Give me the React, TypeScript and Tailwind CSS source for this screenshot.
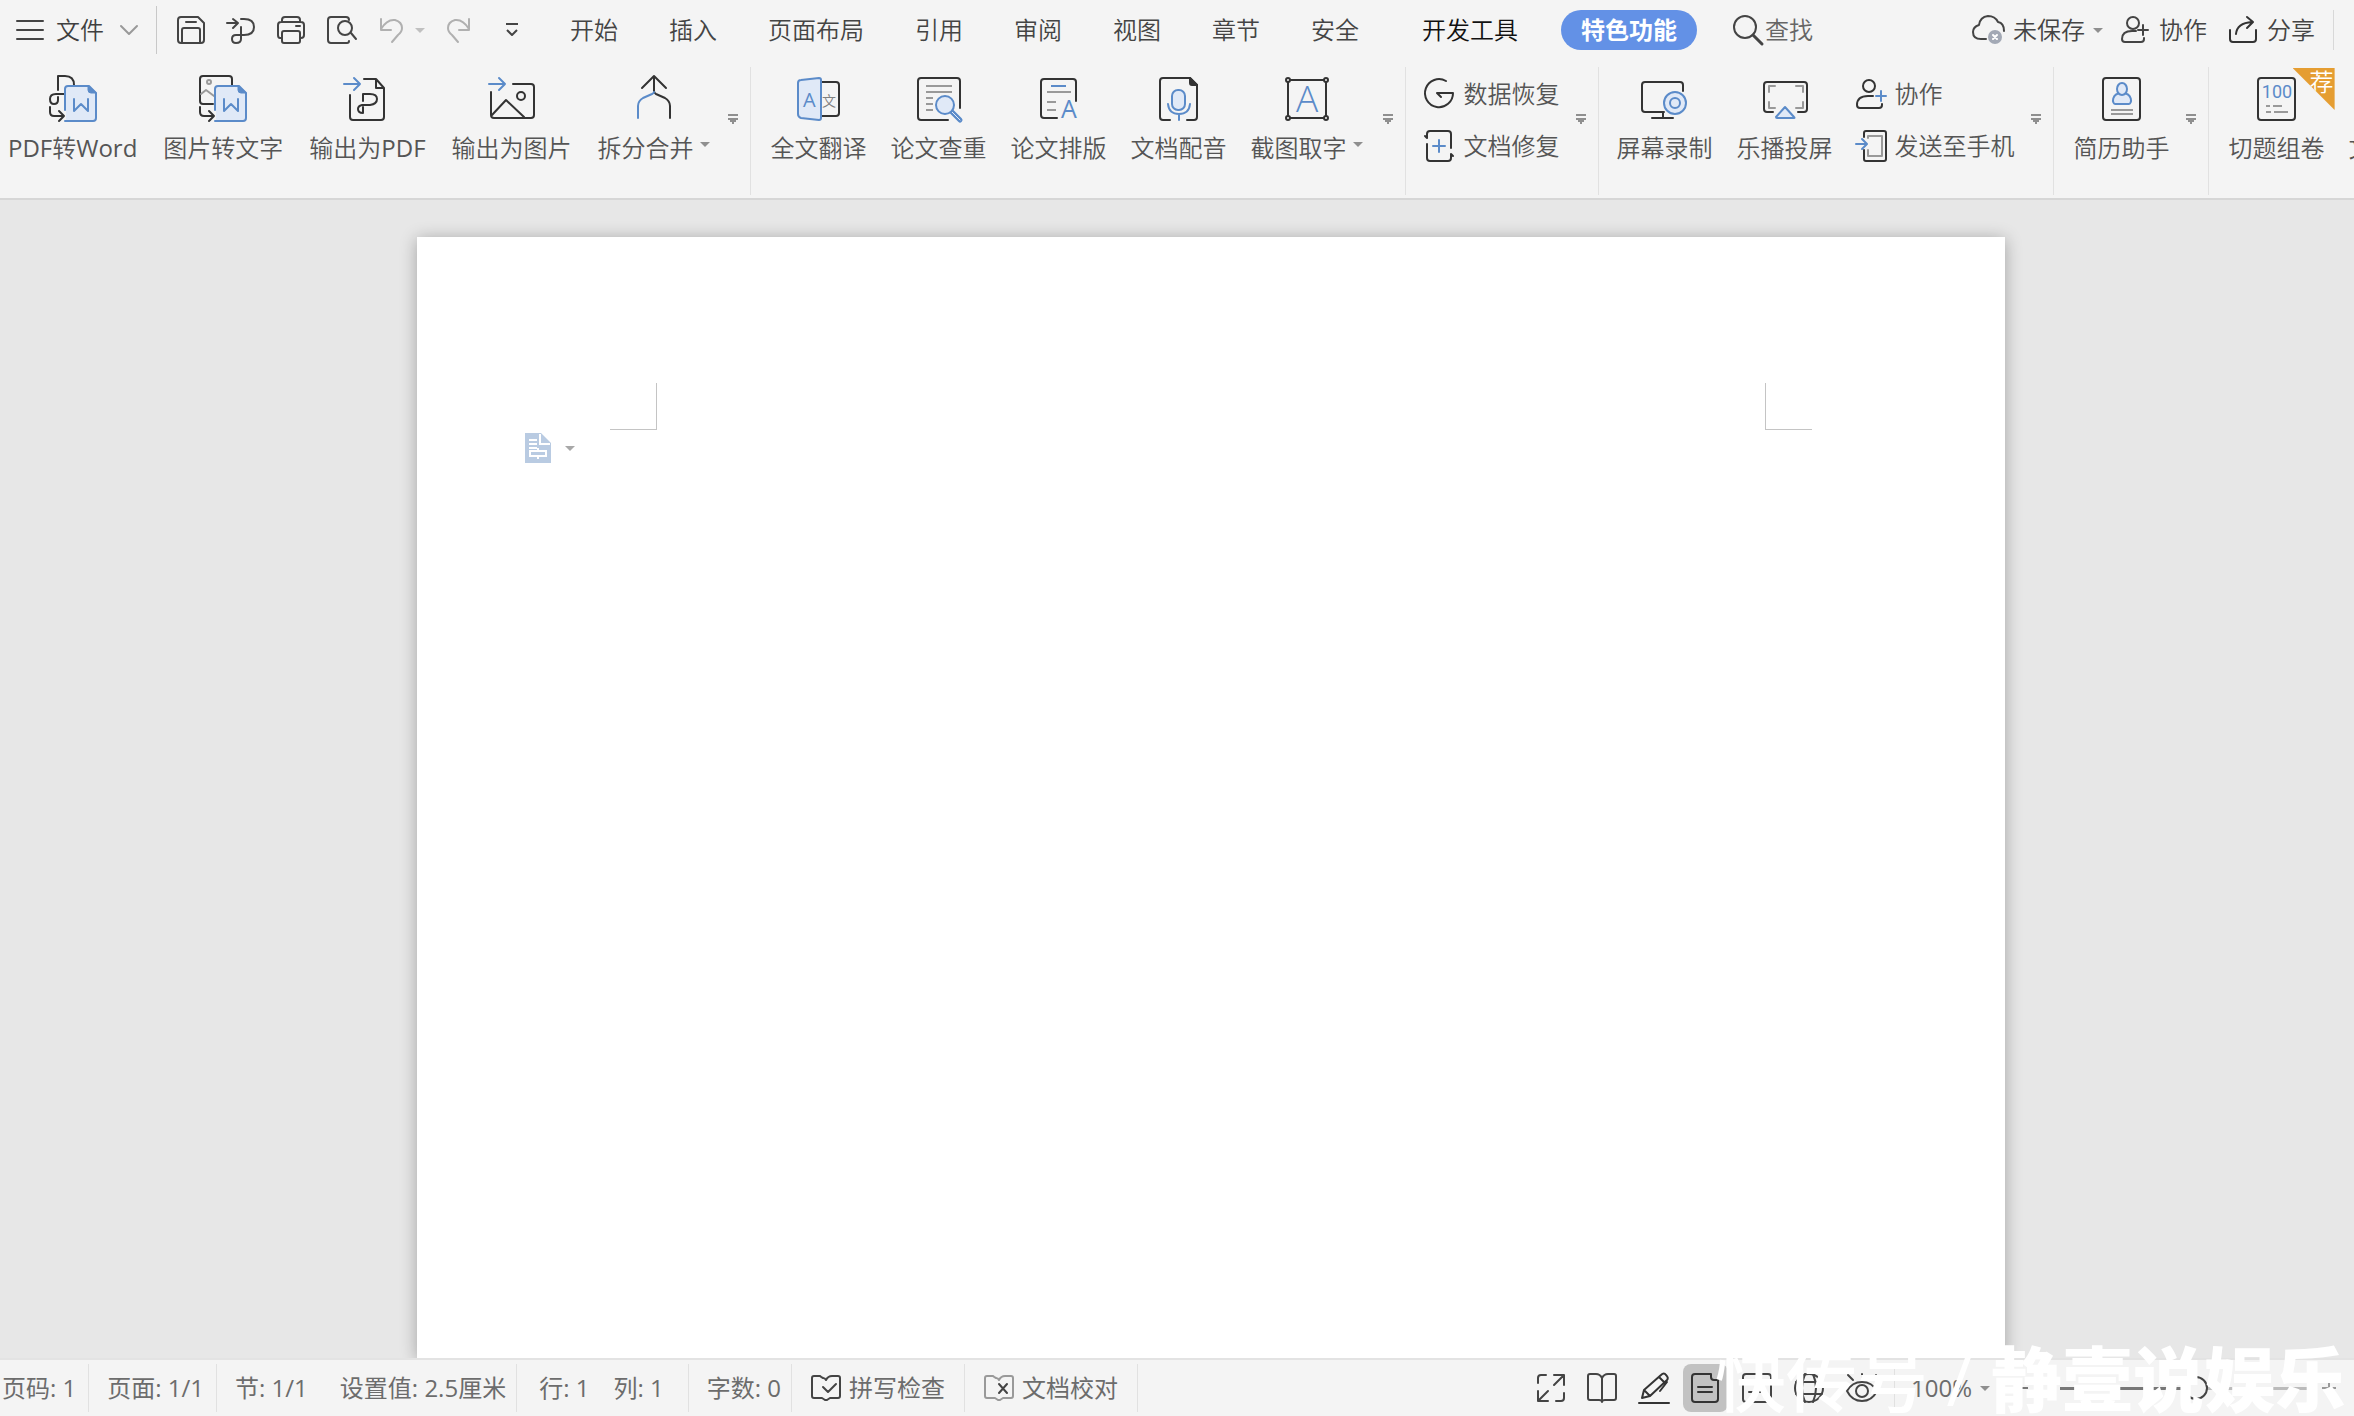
import type { ReactNode } from "react";

const INK = "#333333";
const BLUE = "#5b8bc9";
const TINT = "#e0e9f7";
const GRAY = "#999999";

type IconProps = {
  w?: number;
  h?: number;
  children: ReactNode;
  className?: string;
};

function Icon({ w = 48, h = 48, children, className = "" }: IconProps) {
  return (
    <svg
      width={w}
      height={h}
      viewBox={`0 0 ${w} ${h}`}
      fill="none"
      stroke={INK}
      strokeWidth="2"
      strokeLinecap="round"
      strokeLinejoin="round"
      className={`block shrink-0 overflow-visible ${className}`}
      aria-hidden="true"
    >
      {children}
    </svg>
  );
}

function Caret({ className = "text-[#8f8f8f]" }: { className?: string }) {
  return (
    <svg width="10" height="5" viewBox="0 0 10 5" className={`block shrink-0 ${className}`} aria-hidden="true">
      <path d="M0 0h10L5 5z" fill="currentColor" />
    </svg>
  );
}

function GroupMenu({ label }: { label: string }) {
  return (
    <button type="button" aria-label={label} className="mt-10">
      <svg width="10" height="10" viewBox="0 0 10 10" fill="#8f8f8f" className="block">
        <path d="M0 0h10v2H0zM0 4h10v2H8v2H6v2H4V8H2V6H0z" />
      </svg>
    </button>
  );
}

/* word page with folded corner, shared by two converters */
function WordSheet() {
  return (
    <>
      <path d="M16 36V16q0-4 4-4h20l7 7v25q0 4-4 4H17V36z" fill={TINT} stroke="none" />
      <path d="M16 36V15q0-3 3-3h21l7 7v25q0 3-3 3H16" stroke={BLUE} />
      <path d="M39 12v4q0 3 3 3h5z" fill={BLUE} stroke={BLUE} strokeWidth="1" />
      <path d="M25 25v12l7-7 7 7V25" stroke={BLUE} />
      <path d="M1 33v5q0 4 4 4h10M10 37l5 5-5 5" />
    </>
  );
}

const PdfToWord = () => (
  <Icon>
    <path d="M9 16V2h7q9 0 9 9M16 20H7q-6 0-6 5t4 5q4 0 4-4v-3" />
    <WordSheet />
  </Icon>
);

const ImageToText = () => (
  <Icon>
    <path d="M14 30H4q-3 0-3-3V5q0-3 3-3h26q3 0 3 3v6" />
    <circle cx="10" cy="8" r="2" stroke={GRAY} />
    <path d="M2 20l5-4 8 6" stroke={GRAY} />
    <WordSheet />
  </Icon>
);

const ToPdf = () => (
  <Icon>
    <path d="M1 10h16M11 4l6 6-6 6" stroke={BLUE} />
    <path d="M21 5h12l8 9v29q0 3-3 3H10q-3 0-3-3V21M33 5v9h8M20 27v-7h7q7 0 7 5t-7 6h-8q-4 1-4 4 0 4 5 4v-6" />
  </Icon>
);

const ToImage = () => (
  <Icon>
    <path d="M1 10h16M11 4l6 6-6 6" stroke={BLUE} />
    <path d="M25 10h18q3 0 3 3v28q0 3-3 3H6q-3 0-3-3V18M4 41l14-15 18 17" />
    <circle cx="33" cy="22" r="4" />
  </Icon>
);

const SplitMerge = () => (
  <Icon>
    <path d="M12 14L24 2l12 12M24 2v15q0 2 2 3l9 4q5 3 5 8v12" />
    <path d="M24 18q0 1-2 2l-9 4q-5 3-5 8v12" stroke={BLUE} />
  </Icon>
);

const Translate = () => (
  <Icon>
    <path d="M26 8h15q3 0 3 3v28q0 3-3 3H26" />
    <path d="M26 6q0-2-2-2L6 6Q3 6 3 9v31q0 3 3 4l18 2q2 0 2-2z" fill={TINT} stroke={BLUE} />
    <text x="8" y="33" fontSize="20" fill={BLUE} stroke="none" className="font-normal">A</text>
    <text x="27" y="32" fontSize="14" fill="#808080" stroke="none">文</text>
  </Icon>
);

const PaperCheck = () => (
  <Icon>
    <path d="M33 46H6q-3 0-3-3V7q0-3 3-3h36q3 0 3 3v27" />
    <path d="M11 12h26M11 18h26M11 24h7M11 30h7M11 36h7" stroke={GRAY} strokeLinecap="butt" />
    <path d="M36 37l9 9" stroke={BLUE} strokeWidth="5" />
    <path d="M37 38l8 8" stroke={TINT} strokeWidth="1" />
    <circle cx="30" cy="31" r="9" fill={TINT} stroke={BLUE} />
  </Icon>
);

const PaperLayout = () => (
  <Icon>
    <path d="M22 44H9q-3 0-3-3V8q0-3 3-3h29q3 0 3 3v19" />
    <path d="M16 12h15" stroke={BLUE} strokeLinecap="butt" />
    <path d="M12 18h24M12 28h9M12 36h9" stroke={GRAY} strokeLinecap="butt" />
    <text x="26" y="44" fontSize="25" fill={BLUE} stroke="none" className="font-normal">A</text>
  </Icon>
);

const DocVoice = () => (
  <Icon>
    <path d="M15 46H8q-3 0-3-3V7q0-3 3-3h27l7 7v32q0 3-3 3h-7" />
    <path d="M35 4v5q0 2 2 2h5z" fill={INK} />
    <rect x="17" y="16" width="13" height="20" rx="6" fill={TINT} stroke={BLUE} />
    <path d="M13 30q1 10 11 10t11-10M24 40v6" stroke={BLUE} />
  </Icon>
);

const ScreenText = () => (
  <Icon>
    <path d="M5 6h38v38H5z" />
    <text x="24" y="38" fontSize="37" fill={BLUE} stroke="none" textAnchor="middle" className="font-light">A</text>
    <g fill="#f4f4f4">
      <circle cx="5" cy="6" r="2" />
      <circle cx="43" cy="6" r="2" />
      <circle cx="5" cy="44" r="2" />
      <circle cx="43" cy="44" r="2" />
    </g>
  </Icon>
);

const DataRecovery = () => (
  <Icon w={32} h={32}>
    <path d="M22 3A14 14 0 1 0 29 15H13l4 4" />
  </Icon>
);

const DocRepair = () => (
  <Icon w={32} h={32}>
    <path d="M1 6l2 2V4q0-3 3-3h18q3 0 3 3v14M3 14v14q0 3 3 3h18q3 0 3-3v-4l2 2" />
    <path d="M15 10v12M9 16h12" stroke={BLUE} />
  </Icon>
);

const ScreenRecord = () => (
  <Icon>
    <path d="M23 38H4q-3 0-3-3V11q0-3 3-3h35q3 0 3 3v6M22 38v6M11 44h21" />
    <circle cx="34" cy="29" r="11" fill={TINT} stroke={BLUE} />
    <circle cx="34" cy="29" r="5" stroke={BLUE} />
  </Icon>
);

const ScreenCast = () => (
  <Icon>
    <path d="M12 38H6q-3 0-3-3V11q0-3 3-3h37q3 0 3 3v24q0 3-3 3h-6" />
    <path d="M14 12H8v6M35 12h7v6M8 28v6h6M42 28v6h-7" stroke={GRAY} />
    <path d="M24 33l-9 10q0 1 1 1h17q1 0 0-1z" fill={TINT} stroke={BLUE} />
  </Icon>
);

const Collaborate = () => (
  <Icon w={32} h={32}>
    <circle cx="14" cy="8" r="6" />
    <path d="M18 18h-5Q2 18 2 27q0 3 3 3h19q3 0 3-3v-1" />
    <path d="M26 13v10M21 18h10" stroke={BLUE} />
  </Icon>
);

const SendPhone = () => (
  <Icon w={32} h={32}>
    <path d="M9 7V3q0-2 2-2h18q2 0 2 2v26q0 2-2 2H11q-2 0-2-2V20" />
    <path d="M13 8V6h14v20H13v-6" stroke={GRAY} />
    <path d="M1 14h10M7 9l5 5-5 5" stroke={BLUE} />
  </Icon>
);

const Resume = () => (
  <Icon>
    <rect x="5" y="4" width="37" height="42" rx="3" />
    <path d="M24 19c-11 0-10 11-7 11h14c3 0 4-11-7-11z" fill={TINT} stroke={BLUE} />
    <ellipse cx="24" cy="15" rx="5" ry="6" fill={TINT} stroke={BLUE} />
    <path d="M13 36h22M13 40h22" stroke={GRAY} strokeLinecap="butt" />
  </Icon>
);

const ExamPaper = () => (
  <Icon>
    <rect x="5" y="4" width="37" height="42" rx="3" />
    <text x="24" y="24" fontSize="18" fill={BLUE} stroke="none" textAnchor="middle" className="font-['Roboto'] font-normal">
      100
    </text>
    <path d="M13 32h4M20 32h9M13 38h5M21 38h14" stroke={GRAY} strokeLinecap="butt" />
  </Icon>
);

type RibbonItem = { label: string; icon: ReactNode; caret?: boolean };

function RibbonButton({ label, icon, caret }: RibbonItem) {
  return (
    <button type="button" className="flex shrink-0 flex-col items-center whitespace-nowrap">
      {icon}
      <span className="mt-2 flex items-center gap-1.5 leading-9">
        {/* latin letters are set one step heavier than the hanzi */}
        <span>
          {label.split(/([A-Za-z]+)/).map((part, i) => (i % 2 ? <span key={i} className="font-normal">{part}</span> : part))}
        </span>
        {caret && <Caret className="mb-2 text-[#8f8f8f]" />}
      </span>
    </button>
  );
}

function RibbonRows({ rows }: { rows: RibbonItem[] }) {
  return (
    <div className="mt-0.5 flex shrink-0 flex-col gap-4">
      {rows.map((row) => (
        <button key={row.label} type="button" className="flex h-9 items-center gap-2 whitespace-nowrap">
          {row.icon}
          {row.label}
        </button>
      ))}
    </div>
  );
}

function RibbonGroup({ children, className = "px-5" }: { children: ReactNode; className?: string }) {
  return (
    <div className={`flex h-32 shrink-0 items-start border-r border-[#e1e1e1] pt-[7px] pr-3 ${className}`}>{children}</div>
  );
}

const convertTools: RibbonItem[] = [
  { label: "PDF转Word", icon: <PdfToWord /> },
  { label: "图片转文字", icon: <ImageToText /> },
  { label: "输出为PDF", icon: <ToPdf /> },
  { label: "输出为图片", icon: <ToImage /> },
  { label: "拆分合并", icon: <SplitMerge />, caret: true },
];

const paperTools: RibbonItem[] = [
  { label: "全文翻译", icon: <Translate /> },
  { label: "论文查重", icon: <PaperCheck /> },
  { label: "论文排版", icon: <PaperLayout /> },
  { label: "文档配音", icon: <DocVoice /> },
  { label: "截图取字", icon: <ScreenText />, caret: true },
];

const tabs = ["开始", "插入", "页面布局", "引用", "审阅", "视图", "章节", "安全"];

function QuickAccess() {
  return (
    <div className="flex items-center">
      <button type="button" className="flex items-center gap-3 pr-4 pl-4 text-[#3f3f3f]">
        <Icon w={28} h={20}>
          <path d="M1 1h26M1 10h26M1 19h26" stroke="#444" />
        </Icon>
        文件
        <Icon w={18} h={12} className="ml-1">
          <path d="M1 2l8 8 8-8" stroke="#999" />
        </Icon>
      </button>
      <span className="mr-5 ml-0.5 h-12 w-px bg-[#c8c8c8]" />
      <div className="flex items-center gap-[22px]">
        <button type="button" aria-label="保存">
          <Icon w={28} h={28}>
            <path d="M4 1h17l6 6v17q0 3-3 3H4q-3 0-3-3V4q0-3 3-3zM5 27V14q0-2 2-2h14q2 0 2 2v13M9 6h10" stroke="#444" />
          </Icon>
        </button>
        <button type="button" aria-label="输出为PDF">
          <Icon w={28} h={28}>
            <path d="M0 7h10M6 3l5 4-5 5M14 3h3q10 0 10 8t-10 8h-8q-4 0-4 4t4 4q5 0 5-4V11" stroke="#444" />
          </Icon>
        </button>
        <button type="button" aria-label="打印">
          <Icon w={28} h={28}>
            <path d="M5 6V4q0-3 3-3h12q3 0 3 3v2M5 22H3q-2 0-2-3V9q0-3 3-3h20q3 0 3 3v10q0 3-3 3h-1M19 10h4" stroke="#444" />
            <rect x="5" y="15" width="18" height="12" rx="2" stroke="#444" />
          </Icon>
        </button>
        <button type="button" aria-label="打印预览">
          <Icon w={30} h={28}>
            <path d="M22 4q0-3-3-3H4Q1 1 1 4v20q0 3 3 3h16q2 0 2-2M24 17l5 6" stroke="#444" />
            <circle cx="18" cy="12" r="7" stroke="#444" />
          </Icon>
        </button>
        <button type="button" aria-label="撤消" className="flex items-center gap-3">
          <Icon w={24} h={26}>
            <path d="M2 2v11h10M2 12Q8 2 16 3q7 2 7 8 0 4-4 7l-6 7" stroke="#b0b0b0" />
          </Icon>
          <Caret className="text-[#c0c0c0]" />
        </button>
        <button type="button" aria-label="恢复">
          <Icon w={24} h={26}>
            <path d="M22 2v11H12M22 12Q16 2 8 3q-7 2-7 8 0 4 4 7l6 7" stroke="#b0b0b0" />
          </Icon>
        </button>
        <button type="button" aria-label="自定义快速访问工具栏" className="ml-3">
          <Icon w={14} h={14}>
            <path d="M1 1h12M2 7l5 5 5-5" stroke="#444" strokeLinecap="butt" />
          </Icon>
        </button>
      </div>
    </div>
  );
}

function AccountTools() {
  return (
    <div className="mr-5 ml-auto flex h-10 items-center border-r border-[#d8d8d8] pr-[18px] whitespace-nowrap">
      <button type="button" className="flex items-center gap-2">
        <Icon w={33} h={30}>
          <path d="M14 24H9Q1 24 1 17q0-5 6-7 1-8 9-9 7 0 10 6 6 1 6 9" stroke="#444" />
          <circle cx="23" cy="22" r="7" fill="#a3a9b5" stroke="none" />
          <path d="M21 20l4 4M25 20l-4 4" stroke="#fff" />
        </Icon>
        未保存
        <Caret />
      </button>
      <button type="button" className="ml-[18px] flex items-center gap-2.5">
        <Icon w={28} h={28}>
          <circle cx="12" cy="7" r="6" stroke="#444" />
          <path d="M15 15h-4Q1 15 1 23q0 3 3 3h16q3 0 3-3v-1M22 9v10M17 14h10" stroke="#444" />
        </Icon>
        协作
      </button>
      <button type="button" className="ml-[22px] flex items-center gap-2.5">
        <Icon w={28} h={28}>
          <path d="M1 14v9q0 3 3 3h20q3 0 3-3v-9M7 18Q8 7 23 6M18 1l6 5-6 6" />
        </Icon>
        分享
      </button>
    </div>
  );
}

function StatusText({ children, className }: { children: ReactNode; className: string }) {
  return <div className={`flex h-12 shrink-0 items-center whitespace-nowrap ${className}`}>{children}</div>;
}

function StatusBar() {
  return (
    <footer className="relative flex h-[58px] shrink-0 items-center border-t-2 border-[#e3e3e3] bg-[#f4f4f4] font-normal text-[#6c6c6c]">
      <StatusText className="border-r border-[#e1e1e1] pr-3 pl-0.5">页码: 1</StatusText>
      <StatusText className="border-r border-[#e1e1e1] pr-3 pl-[18px]">页面: 1/1</StatusText>
      <StatusText className="gap-8 border-r border-[#e1e1e1] pr-2.5 pl-[18px]">
        <span>节: 1/1</span>
        <span>设置值: 2.5厘米</span>
      </StatusText>
      <StatusText className="gap-6 border-r border-[#e1e1e1] pr-6 pl-[22px]">
        <span>行: 1</span>
        <span>列: 1</span>
      </StatusText>
      <StatusText className="border-r border-[#e1e1e1] pr-2.5 pl-[18px]">字数: 0</StatusText>
      <StatusText className="border-r border-[#e1e1e1] px-[19px]">
        <button type="button" className="flex items-center gap-2">
          <Icon w={30} h={26}>
            <path d="M12 3q-2-1-3-2H3Q1 1 1 3v18q0 2 2 2h8l3 2h2l3-2h8q2 0 2-2V3q0-2-2-2h-6q-4 0-6 4-1-2-3-2M12 12l5 5 8-8" stroke="#444" />
          </Icon>
          拼写检查
        </button>
      </StatusText>
      <StatusText className="border-r border-[#e1e1e1] px-[19px]">
        <button type="button" className="flex items-center gap-2">
          <Icon w={30} h={26}>
            <path d="M12 3q-2-1-3-2H3Q1 1 1 3v18q0 2 2 2h8l3 2h2l3-2h8q2 0 2-2V3q0-2-2-2h-6q-4 0-6 4-1-2-3-2" stroke="#999" />
            <path d="M15 9l8 9M23 9l-8 9" stroke="#444" />
          </Icon>
          文档校对
        </button>
      </StatusText>

      <div className="ml-auto flex items-center pr-[18px]">
        <div className="flex h-12 items-center gap-[22px] border-r border-[#e1e1e1] pr-4">
          <button type="button" aria-label="全屏显示">
            <Icon w={28} h={28}>
              <path d="M1 9V4q0-3 3-3h5M17 1h10v10M27 1L17 11M1 17v10h10M1 27l10-10M27 19v5q0 3-3 3h-5" stroke="#444" />
            </Icon>
          </button>
          <button type="button" aria-label="阅读版式">
            <Icon w={30} h={30}>
              <path d="M15 29V5q-2-4-6-4H3Q1 1 1 3v22q0 2 2 2h9q3 0 3 2 0-2 3-2h9q2 0 2-2V3q0-2-2-2h-6q-4 0-6 4" stroke="#444" />
            </Icon>
          </button>
          <button type="button" aria-label="写作模式">
            <Icon w={30} h={32}>
              <path d="M0 31h30M3 26l2-8L22 3q3-3 5 0 3 3 1 5L11 24zM5 18l6 6M20 5l6 6M28 10l-7 9" />
            </Icon>
          </button>
          <button type="button" aria-label="页面视图" aria-pressed="true" className="-mx-2 flex h-12 w-[45px] items-center justify-center rounded-lg bg-[#c2c2c2]">
            <Icon w={28} h={30}>
              <path d="M4 1h16v3q0 3 3 3h4v19q0 3-3 3H4q-3 0-3-3V4q0-3 3-3zM7 14h14M7 19h14" />
            </Icon>
          </button>
          <button type="button" aria-label="大纲">
            <Icon w={30} h={30}>
              <path d="M4 1h22q3 0 3 3v22q0 3-3 3H4q-3 0-3-3V4q0-3 3-3zM7 10h3M13 10h10M7 19h3M13 19h10" stroke="#444" />
            </Icon>
          </button>
          <button type="button" aria-label="Web版式">
            <Icon w={30} h={30}>
              <circle cx="15" cy="15" r="14" stroke="#444" />
              <path d="M11 1q-6 14 0 28M19 1q6 14 0 28M2 9h26M2 21h26" stroke="#444" />
            </Icon>
          </button>
          <button type="button" aria-label="护眼模式">
            <Icon w={32} h={30}>
              <path d="M1 18q5-9 15-9t15 9q-5 10-15 10T1 18zM2 2l5 5M16 1v3M30 2l-4 5" stroke="#444" />
              <circle cx="16" cy="18" r="6" stroke="#444" />
            </Icon>
          </button>
        </div>
        <button type="button" className="ml-4 flex items-center gap-2">
          100%
          <Caret />
        </button>
        <button type="button" aria-label="缩小" className="ml-6">
          <Icon w={14} h={14}>
            <path d="M0 7h14" stroke="#777" strokeLinecap="butt" />
          </Icon>
        </button>
        <input
          type="range"
          aria-label="显示比例"
          min={0}
          max={100}
          defaultValue={55}
          className="mr-3 ml-8 h-6 w-[250px] appearance-none bg-transparent [&::-webkit-slider-runnable-track]:h-[3px] [&::-webkit-slider-runnable-track]:bg-linear-to-r [&::-webkit-slider-runnable-track]:from-[#777777] [&::-webkit-slider-runnable-track]:from-55% [&::-webkit-slider-runnable-track]:to-[#bbbbbb] [&::-webkit-slider-runnable-track]:to-55% [&::-webkit-slider-thumb]:-mt-[11px] [&::-webkit-slider-thumb]:size-6 [&::-webkit-slider-thumb]:appearance-none [&::-webkit-slider-thumb]:rounded-full [&::-webkit-slider-thumb]:border-2 [&::-webkit-slider-thumb]:border-[#444444] [&::-webkit-slider-thumb]:bg-[#f4f4f4]"
        />
        <button type="button" aria-label="放大">
          <Icon w={14} h={14}>
            <path d="M0 7h14M7 0v14" stroke="#999" strokeLinecap="butt" />
          </Icon>
        </button>
      </div>

      <p className="pointer-events-none absolute right-2 bottom-0 flex items-center text-[71px] leading-[74px] whitespace-pre text-white">
        <span className="font-medium">快传号 / </span>
        <span className="font-black">静壹说娱乐</span>
      </p>
    </footer>
  );
}

export default function App() {
  return (
    <div className="flex h-screen flex-col overflow-hidden bg-[#e7e7e7] font-['Open_Sans','Noto_Sans_CJK_SC',sans-serif] text-2xl font-[350] text-[#444444]">
      <header className="shrink-0 border-b-2 border-[#d6d6d6] bg-[#f4f4f4]">
        <div className="flex h-[60px] items-center">
          <QuickAccess />
          <nav className="ml-[51px] flex items-center gap-[51px] whitespace-nowrap">
            {tabs.map((tab) => (
              <a key={tab} href="#">
                {tab}
              </a>
            ))}
            <a href="#" className="ml-3 text-[#111111]">
              开发工具
            </a>
            <a href="#" aria-current="page" className="-ml-2 flex h-10 items-center rounded-full bg-[#6391e6] px-5 font-bold text-white">
              特色功能
            </a>
          </nav>
          <button type="button" className="ml-9 flex items-center gap-0.5 whitespace-nowrap text-[#666666]">
            <Icon w={30} h={30}>
              <circle cx="12" cy="12" r="11" stroke="#444" />
              <path d="M20 20l9 9" stroke="#444" strokeWidth="3" />
            </Icon>
            查找
          </button>
          <AccountTools />
        </div>

        <div className="flex h-[138px] items-start overflow-hidden pt-[7px] text-[#555555]">
          <RibbonGroup className="pl-2">
            <div className="flex gap-[26px]">
              {convertTools.map((tool) => (
                <RibbonButton key={tool.label} {...tool} />
              ))}
            </div>
            <span className="w-[18px]" />
            <GroupMenu label="更多转换工具" />
          </RibbonGroup>
          <RibbonGroup className="pl-5">
            <div className="flex gap-6">
              {paperTools.map((tool) => (
                <RibbonButton key={tool.label} {...tool} />
              ))}
            </div>
            <span className="w-5" />
            <GroupMenu label="更多论文工具" />
          </RibbonGroup>
          <RibbonGroup className="pl-[18px]">
            <RibbonRows
              rows={[
                { label: "数据恢复", icon: <DataRecovery /> },
                { label: "文档修复", icon: <DocRepair /> },
              ]}
            />
            <span className="w-4" />
            <GroupMenu label="更多修复工具" />
          </RibbonGroup>
          <RibbonGroup className="pl-[18px]">
            <div className="flex gap-[22px]">
              <div className="flex gap-6">
                <RibbonButton label="屏幕录制" icon={<ScreenRecord />} />
                <RibbonButton label="乐播投屏" icon={<ScreenCast />} />
              </div>
              <RibbonRows
                rows={[
                  { label: "协作", icon: <Collaborate /> },
                  { label: "发送至手机", icon: <SendPhone /> },
                ]}
              />
            </div>
            <span className="w-4" />
            <GroupMenu label="更多协作工具" />
          </RibbonGroup>
          <RibbonGroup className="pl-5">
            <RibbonButton label="简历助手" icon={<Resume />} />
            <span className="w-4" />
            <GroupMenu label="更多求职工具" />
          </RibbonGroup>
          <div className="flex shrink-0 gap-6 pt-[7px] pl-5">
            <div className="relative">
              <RibbonButton label="切题组卷" icon={<ExamPaper />} />
              <span className="absolute -top-1.5 -right-2.5 flex size-[42px] items-start justify-end bg-[#e59d31] pr-px leading-7 text-white [clip-path:polygon(0_0,100%_0,100%_100%)]">
                荐
              </span>
            </div>
            <RibbonButton label="文档" icon={<Icon>{null}</Icon>} />
          </div>
        </div>
      </header>

      <main className="flex min-h-0 flex-1 justify-center overflow-hidden pt-[37px] pl-[68px]">
        <div className="w-[1588px] bg-white shadow-[0_2px_16px_rgba(0,0,0,0.3)]">
          <div className="flex justify-between px-[193px] pt-[146px]">
            <span className="size-[47px] border-r border-b border-[#c4c4c4]" />
            <span className="size-[47px] border-b border-l border-[#c4c4c4]" />
          </div>
          <button type="button" aria-label="段落布局" className="mt-[3px] ml-[108px] flex items-center gap-3.5">
            <svg width="26" height="30" viewBox="0 0 26 30" className="block">
              <path d="M0 0h16l10 10v20H0z" fill="#b9cbe2" />
              <path d="M15 1v10h10M4 7h8M4 11h8M4 15h8M13 15v3M13 24v2M5 18h16v5H5z" fill="none" stroke="#fff" strokeWidth="2" />
            </svg>
            <Caret className="text-[#a8a8a8]" />
          </button>
        </div>
      </main>

      <StatusBar />
    </div>
  );
}
